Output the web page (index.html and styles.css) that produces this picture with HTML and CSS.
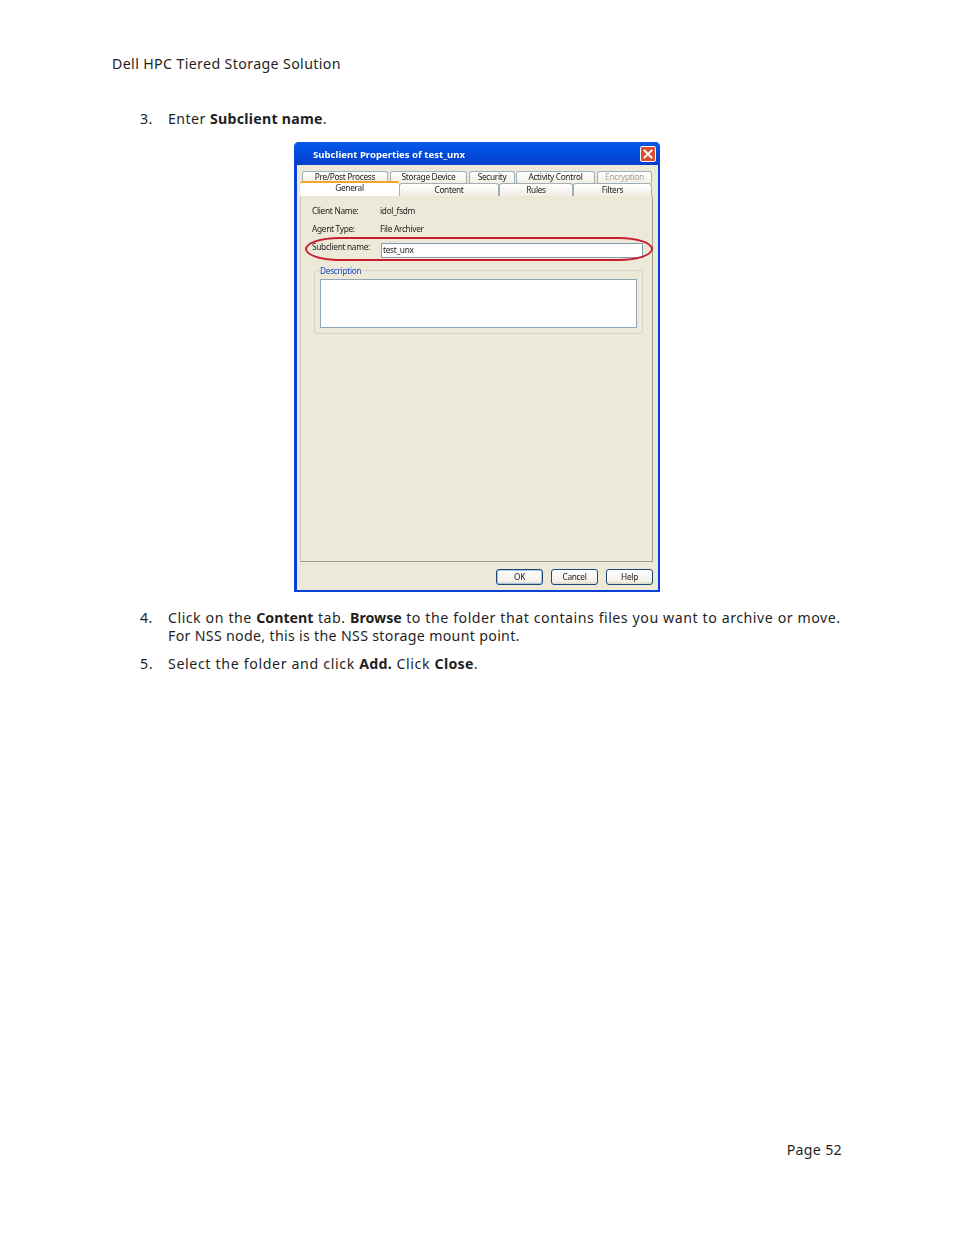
FILE: index.html
```html
<!DOCTYPE html>
<html lang="en">
<head>
<meta charset="utf-8">
<title>Dell HPC Tiered Storage Solution - Page 52</title>
<link rel="stylesheet" href="styles.css">
</head>
<body>
<div class="page">
  <header class="doc-header">Dell HPC Tiered Storage Solution</header>
  <main class="content">
    <div class="step step-3"><span class="num">3.</span><p>Enter <b>Subclient name</b>.</p></div>
    <div class="dialog">
      <div class="titlebar">
        <span class="title">Subclient Properties of test_unx</span>
        <span class="close"><svg viewBox="0 0 16 16" width="16" height="16"><path d="M4 4l8 8M12 4l-8 8" stroke="#fff" stroke-width="2.2" stroke-linecap="square"/></svg></span>
      </div>
      <div class="client">
        <div class="tabs-back">
          <span class="tab t1">Pre/Post Process</span>
          <span class="tab t2">Storage Device</span>
          <span class="tab t3">Security</span>
          <span class="tab t4">Activity Control</span>
          <span class="tab t5 disabled">Encryption</span>
        </div>
        <div class="tabs-front">
          <span class="tab selected">General</span>
          <span class="tab f2">Content</span>
          <span class="tab f3">Rules</span>
          <span class="tab f4">Filters</span>
        </div>
        <div class="panel">
          <div class="field"><span class="label">Client Name:</span><span>idol_fsdm</span></div>
          <div class="field f-agent"><span class="label">Agent Type:</span><span>File Archiver</span></div>
          <div class="field f-name">
            <span class="label">Subclient name:</span><span class="input">test_unx</span>
            <span class="ring"></span>
          </div>
          <fieldset class="desc">
            <legend>Description</legend>
            <div class="textarea"></div>
          </fieldset>
        </div>
        <div class="buttons">
          <span class="btn default">OK</span>
          <span class="btn">Cancel</span>
          <span class="btn">Help</span>
        </div>
      </div>
    </div>
    <div class="step step-4"><span class="num">4.</span><p><span class="line-a">Click on the <b>Content</b> tab. <b>Browse</b> to the folder that contains files you want to archive or move.</span><br><span class="line-b">For NSS node, this is the NSS storage mount point.</span></p></div>
    <div class="step step-5"><span class="num">5.</span><p>Select the folder and click <b>Add.</b> Click <b>Close</b>.</p></div>
  </main>
  <footer class="doc-footer">Page 52</footer>
</div>
</body>
</html>
```
FILE: styles.css
```css
* { box-sizing: border-box; }
html, body { margin: 0; padding: 0; background: #fff; }
body { font-family: "Noto Sans", "DejaVu Sans", sans-serif; color: #1f1f1f; font-size: 14.2px; line-height: 18px; }
.page { width: 954px; height: 1235px; padding: 55px 112px 76px; display: flex; flex-direction: column; }
.doc-header { height: 18px; letter-spacing: .37px; }
.content { padding-left: 28px; margin-top: 37px; }
.step { display: grid; grid-template-columns: 28px 1fr; letter-spacing: .43px; }
.step p { margin: 0; white-space: nowrap; }
.step b { font-weight: 700; letter-spacing: .25px; }
.step-4 { margin-top: 17px; }
.step-4 b { letter-spacing: 0; }
.line-a { letter-spacing: .5px; word-spacing: .25px; }
.line-b { letter-spacing: .31px; }
.step-5 { margin-top: 10px; letter-spacing: .62px; word-spacing: .1px; }
.doc-footer { margin-top: auto; text-align: right; height: 18px; letter-spacing: .3px; }

.dialog { width: 366px; height: 450px; margin: 14px 0 0 154px; background: #0a3fd8; border-radius: 5px 5px 0 0; padding: 0 2px 2px; display: flex; flex-direction: column; font-size: 8.3px; line-height: 10px; letter-spacing: -.3px; color: #222; }
.titlebar { height: 23px; margin: 0 -2px; padding: 0 4px 0 19px; border-radius: 5px 5px 0 0; background: linear-gradient(#0a5be8, #0355e6 20%, #0246d6 70%, #0a3fc8); display: flex; align-items: center; justify-content: space-between; color: #fff; font-weight: 700; font-size: 9.6px; letter-spacing: 0; }
.title { filter: blur(.25px); margin-top: 3px; }
.close { width: 16px; height: 16px; border: 1px solid #fff; border-radius: 2px; background: #d9502f; display: flex; align-items: center; justify-content: center; }
.close svg { width: 14px; height: 14px; }
.client { flex: 1; background: #ece9d8; padding: 6px 5px 0 3px; display: flex; flex-direction: column; border-left: 1px solid #0a3fd8; }

.tabs-back { display: flex; height: 12px; padding-left: 2px; gap: 2px; }
.tab { display: block; text-align: center; background: linear-gradient(#fff, #f1efe4); border: 1px solid #9fb0b8; border-bottom: 0; border-radius: 3px 3px 0 0; filter: blur(.2px); white-space: nowrap; }
.t1 { width: 86px; }
.t2 { width: 77px; }
.t3 { width: 46px; }
.t4 { width: 79px; margin-left: -1px; }
.t5 { width: 55px; }
.disabled { color: #a5a294; }
.tabs-front { display: flex; height: 15px; margin-top: -2px; position: relative; align-items: flex-end; }
.tabs-front .tab { height: 13px; line-height: 11px; }
.tabs-front .selected { width: 99px; height: 15px; line-height: 10px; background: #fff; border: 0; border-top: 2px solid #f5a623; }
.f2 { width: 100px; }
.f3 { width: 74px; }
.f4 { width: 79px; }

.panel { height: 366px; width: 353px; background: #ece9d8; border-right: 1px solid #9c9a8c; border-bottom: 1px solid #9c9a8c; border-left: 1px solid #c9c8bb; padding: 10px 7px 0 11px; display: flex; flex-direction: column; position: relative; }
.field { display: grid; grid-template-columns: 68px 1fr; height: 10px; filter: blur(.2px); }
.f-agent { margin-top: 8px; }
.f-name { margin-top: 4px; height: 24px; position: relative; align-items: center; filter: none; grid-template-columns: 69px 1fr; }
.f-name .label { filter: blur(.2px); margin-top: -6px; }
.input { height: 15px; width: 262px; background: #fff; border: 1px solid #7f9db9; line-height: 12px; padding-left: 1px; filter: blur(.2px); }
.ring { position: absolute; left: -7px; top: -1px; width: 348px; height: 24px; border: 2px solid #c81e2b; border-radius: 34px / 12px; }
.desc { margin: 4px 0 0 2px; width: 327px; height: 68px; border: 1px solid #d6d3c2; border-radius: 3px; padding: 4px 5px 0; position: relative; }
.desc legend { color: #1046c8; padding: 0 2px 0 0; margin-left: 0; line-height: 9px; height: 9px; filter: blur(.2px); }
.textarea { height: 49px; width: 317px; background: #fff; border: 1px solid #8fa6b8; }

.buttons { display: flex; justify-content: flex-end; gap: 8px; padding: 7px 0 0; }
.btn { width: 47px; height: 16px; border: 1px solid #1c4a78; border-radius: 3px; background: linear-gradient(#fff, #f4f2e8 80%, #dcd8c8); text-align: center; line-height: 14px; filter: blur(.15px); }
.btn.default { box-shadow: inset 0 0 0 1px #a8c4e8; }
```
